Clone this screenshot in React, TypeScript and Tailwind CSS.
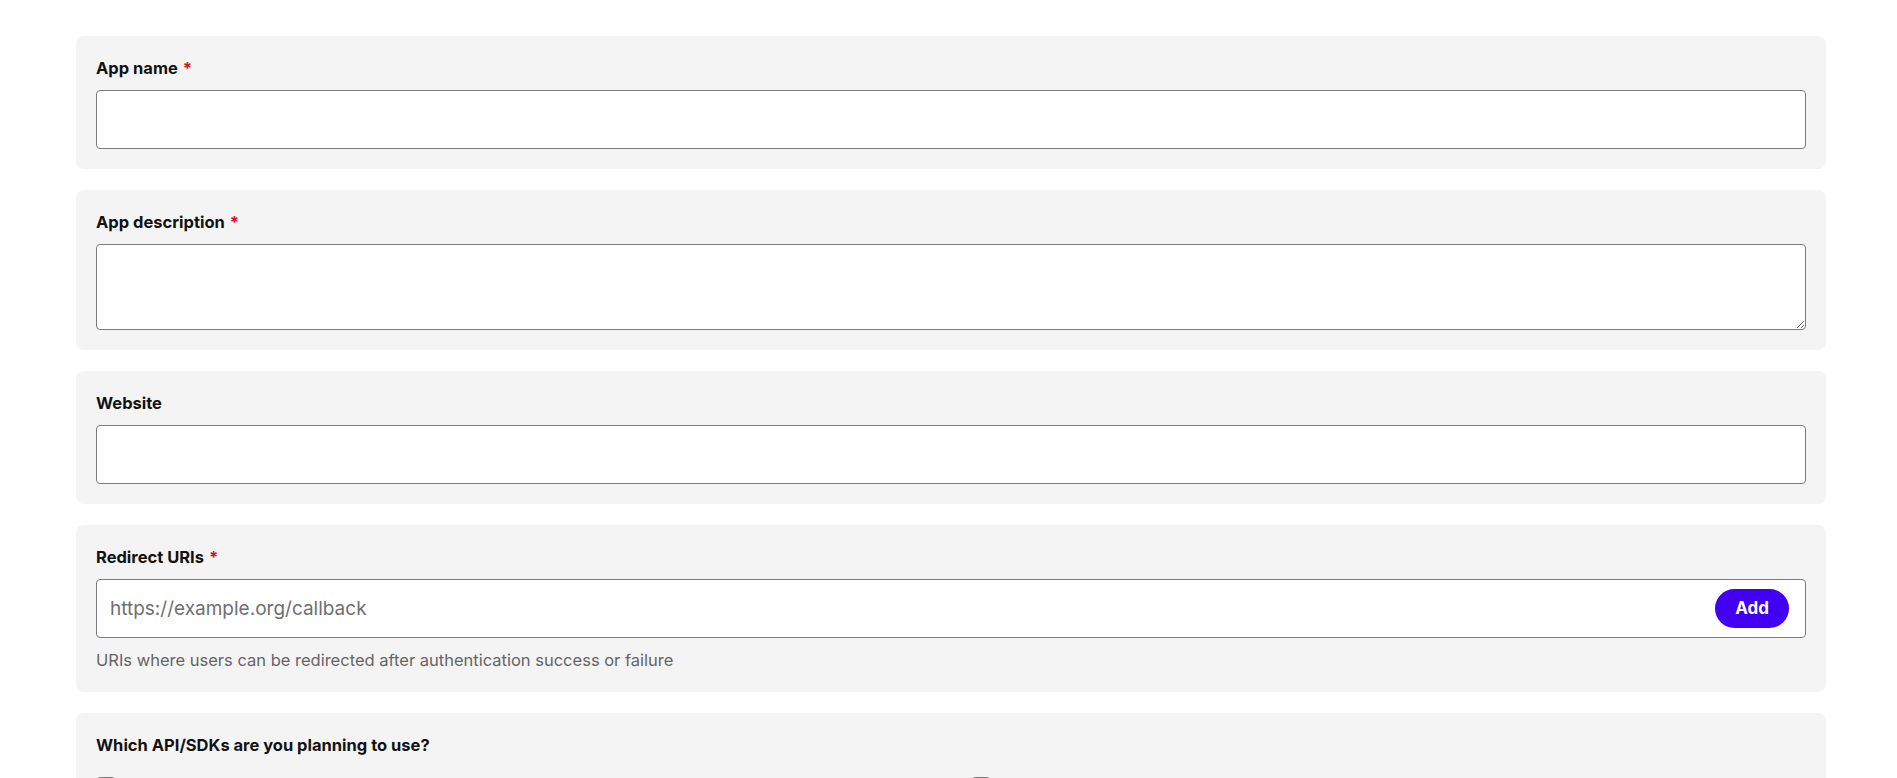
import React from "react";

const font = { fontFamily: "Inter, 'Noto Sans', sans-serif" };

function Label({ text, required }: { text: string; required?: boolean }) {
  return (
    <div className="text-[16.5px] leading-[24px] font-bold text-[#121212]">
      {text}
      {required && <span className="text-[#d31225] ml-[5px]">*</span>}
    </div>
  );
}

function Card({ children }: { children: React.ReactNode }) {
  return <div className="bg-[#f4f4f4] rounded-[8px] p-[20px] flex flex-col">{children}</div>;
}

export default function App() {
  return (
    <div className="min-h-screen bg-white pt-[36px] pl-[76px] pr-[71px] pb-10" style={font}>
      <div className="flex flex-col gap-[21px]">
        <Card>
          <Label text="App name" required />
          <input
            className="mt-[10px] h-[59px] w-full bg-white border border-[#7c7c7c] rounded-[4px] px-[13px] text-[19px] outline-none"
          />
        </Card>
        <Card>
          <Label text="App description" required />
          <textarea
            className="mt-[10px] h-[86px] w-full bg-white border border-[#7c7c7c] rounded-[4px] px-[13px] py-2 text-[19px] outline-none block"
          />
        </Card>
        <Card>
          <Label text="Website" />
          <input
            className="mt-[10px] h-[59px] w-full bg-white border border-[#7c7c7c] rounded-[4px] px-[13px] text-[19px] outline-none"
          />
        </Card>
        <Card>
          <Label text="Redirect URIs" required />
          <div className="mt-[10px] h-[59px] w-full bg-white border border-[#7c7c7c] rounded-[4px] flex items-center pl-[13px] pr-[16px]">
            <input
              placeholder="https://example.org/callback"
              className="flex-1 h-full bg-transparent text-[19px] outline-none placeholder:text-[#6f6f6f] text-[#121212]"
            />
            <button className="h-[39px] w-[74px] rounded-full bg-[#4100f4] text-white text-[17px] font-bold">
              Add
            </button>
          </div>
          <div className="mt-[10px] text-[16.5px] leading-[24px] text-[#656565]">
            URIs where users can be redirected after authentication success or failure
          </div>
        </Card>
        <Card>
          <Label text="Which API/SDKs are you planning to use?" />
          <div className="mt-[18px] grid grid-cols-2 gap-x-[40px] gap-y-3">
            {["Web API", "Ads API", "Web Playback SDK", "Android", "iOS"].map((t) => (
              <label key={t} className="flex items-center gap-[11px] text-[16.5px] leading-[24px] text-[#121212]">
                <span className="w-[20px] h-[20px] rounded-[4px] border border-[#7c7c7c] bg-white" />
                {t}
              </label>
            ))}
          </div>
        </Card>
      </div>
    </div>
  );
}
